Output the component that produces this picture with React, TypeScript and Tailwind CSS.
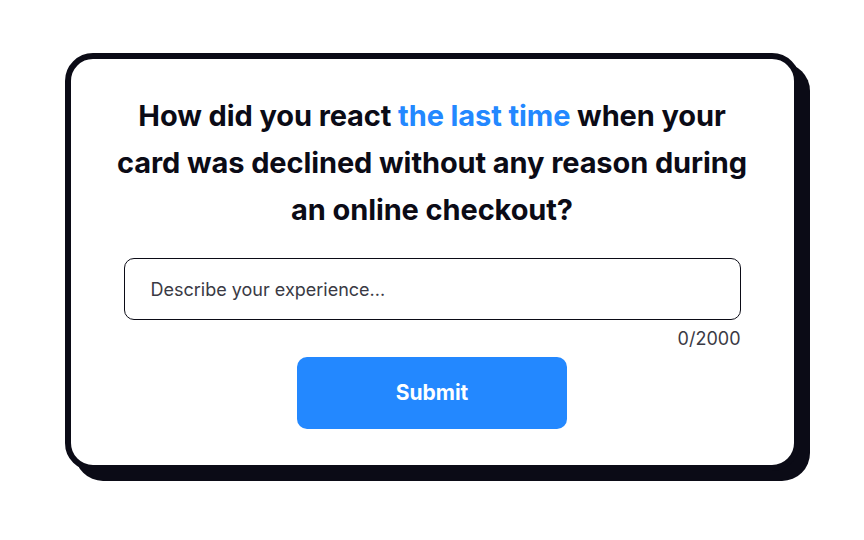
import { useState } from 'react';

export default function App() {
  const [text, setText] = useState('');

  return (
    <div className="w-[864px] h-[540px] bg-white flex justify-center pt-[53px] font-['Inter',sans-serif]">
      <div className="w-[735px] h-[418px] bg-white border-[6px] border-[#0b0b16] rounded-[28px] shadow-[10px_10px_0_0_#0b0b16] flex flex-col items-center px-[53px] pt-[33px]">
        <h1 className="text-center text-[29px] leading-[47px] font-bold text-[#0b0b16] tracking-[-0.1px] whitespace-nowrap">
          How did you react <span className="text-[#2388ff]">the last time</span> when your
          <br />
          card was declined without any reason during
          <br />
          an online checkout?
        </h1>

        <div className="w-full mt-[25px]">
          <input
            value={text}
            onChange={(e) => setText(e.target.value)}
            placeholder="Describe your experience..."
            className="w-full h-[62px] px-[26px] border-[1.5px] border-[#0b0b16] rounded-[10px] text-[18px] text-[#0b0b16] placeholder:text-[#3a3a44] focus:outline-none"
          />
          <div className="text-right text-[18px] text-[#3a3a44] mt-[8px] leading-[22px]">{text.length}/2000</div>
        </div>

        <button className="mt-[7px] w-[270px] h-[72px] bg-[#2388ff] rounded-[10px] text-white text-[21px] font-bold">
          Submit
        </button>
      </div>
    </div>
  );
}
